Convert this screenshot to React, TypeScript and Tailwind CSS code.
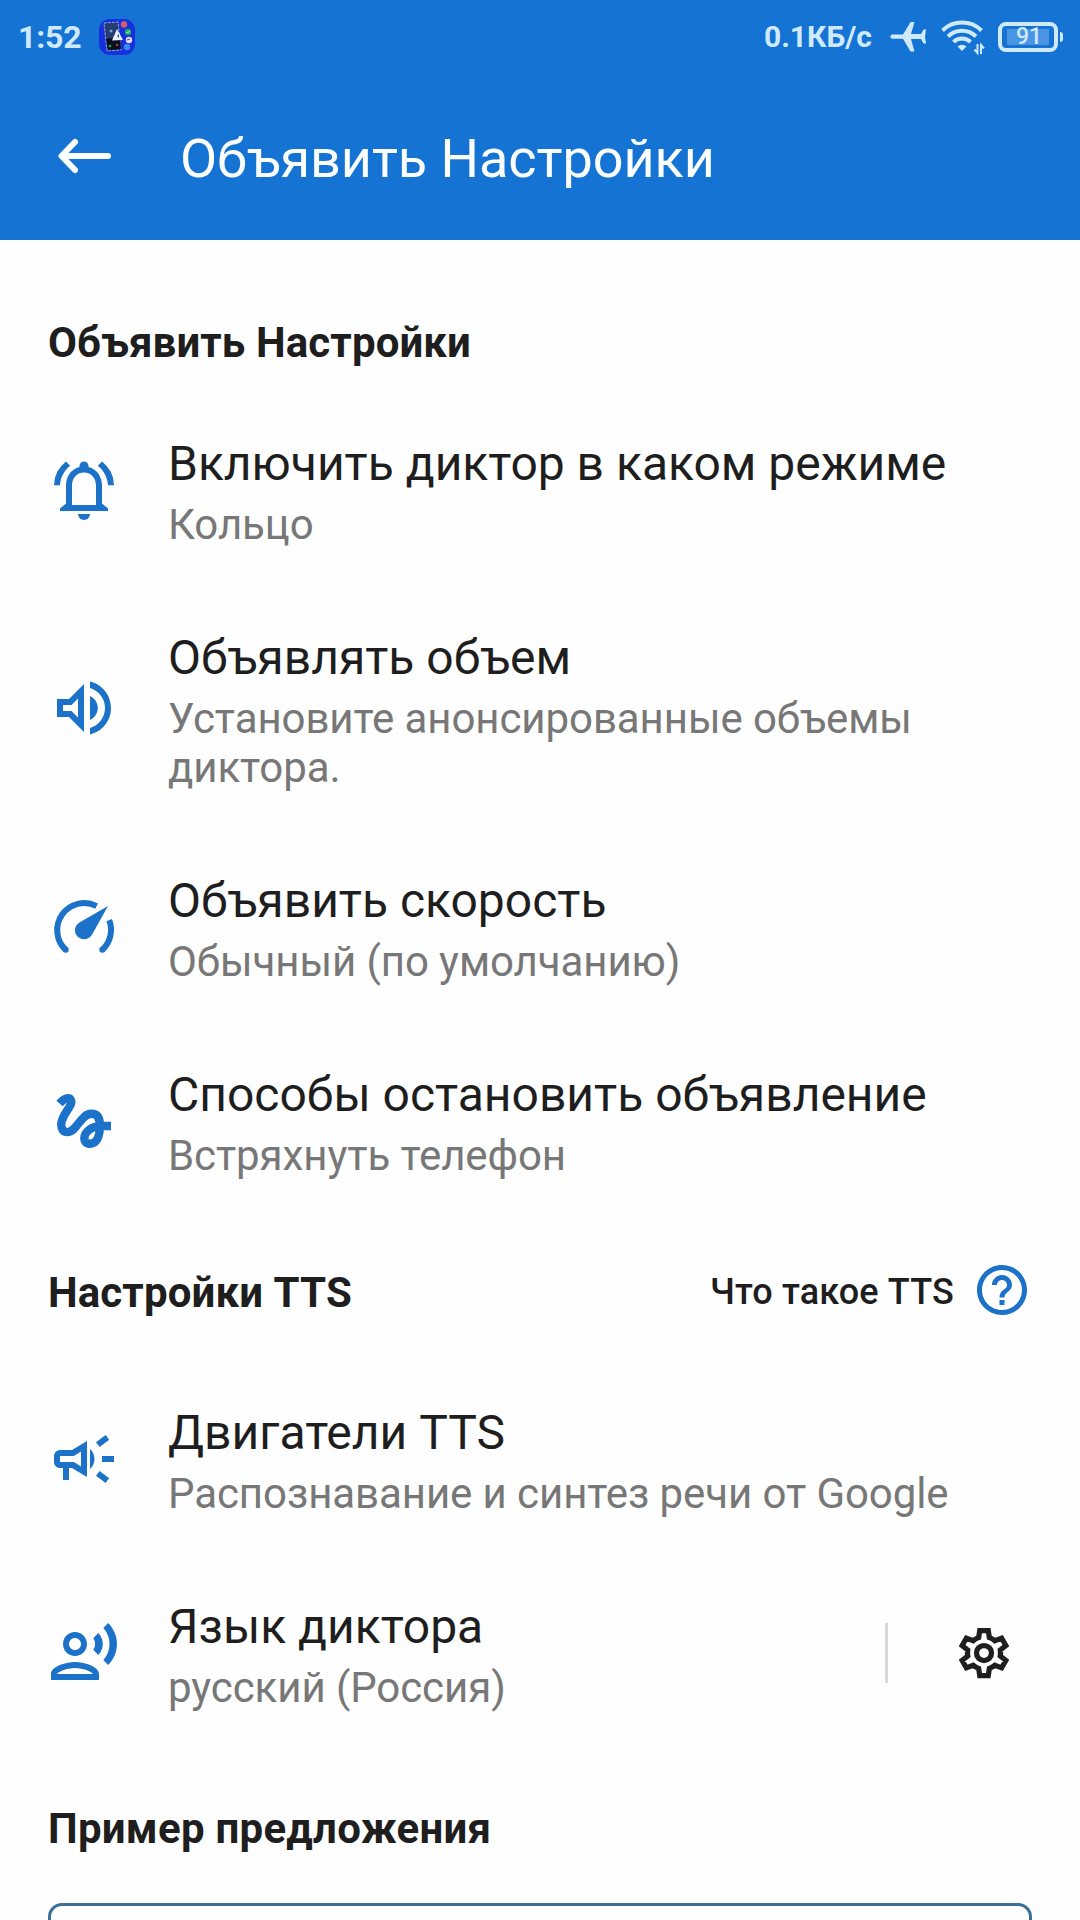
import React from 'react';
import { MdHelpOutline, MdOutlineRecordVoiceOver } from 'react-icons/md';

interface IconProps {
  className?: string;
}

interface SettingRowProps {
  icon: React.ReactNode;
  title: string;
  summary: React.ReactNode;
  tall?: boolean;
  action?: React.ReactNode;
}

function BellIcon({ className }: IconProps) {
  return (
    <svg viewBox="0 0 24 24" fill="currentColor" className={className}>
      <path d="M12 22a2 2 0 0 0 2-2h-4a2 2 0 0 0 2 2z" />
      <path d="M18 16.500v-6c0-3-1.600-5.400-4.500-6.200V4a1.500 1.500 0 0 0-3 0v.3C7.600 5.100 6 7.500 6 10.500v6l-2 1.700v.8h16v-.8zM16 17H8v-6.400C8 8.200 9.500 6.200 12 6.200s4 2 4 4.400z" />
      <path d="M7.400 3.900 6 2.500A10.300 10.300 0 0 0 2 10.400h2c.15-2.650 1.500-5 3.400-6.500zM20 10.400h2a10.300 10.300 0 0 0-4-7.900l-1.400 1.400c1.900 1.500 3.250 3.850 3.400 6.500z" />
    </svg>
  );
}

function VolumeIcon({ className }: IconProps) {
  return (
    <svg viewBox="0 0 24 24" fill="currentColor" className={className}>
      <path fillRule="evenodd" d="M3 9h4l5-5v16l-5-5H3zM5 11v2h2.850L10 15.150v-6.300L7.850 11z" />
      <path d="M14 8v8c1.500-.7 2.600-2.200 2.600-4S15.500 8.700 14 8z" />
      <path d="M14 3.200v2.100c2.900.9 5 3.500 5 6.700s-2.100 5.800-5 6.700v2.100c4-.9 7-4.500 7-8.800s-3-7.900-7-8.800z" />
    </svg>
  );
}

function SpeedIcon({ className }: IconProps) {
  return (
    <svg viewBox="0 0 24 24" className={className}>
      <path d="M5.900 19.600A9 9 0 0 1 16.200 5.050M20.400 9.700a9 9 0 0 1-2.300 9.900" fill="none" stroke="currentColor" strokeWidth="2" />
      <circle cx="5.900" cy="19.600" r="1" fill="currentColor" />
      <circle cx="18.100" cy="19.600" r="1" fill="currentColor" />
      <path d="M20 5 10.500 10.500c-1.500.9-1.900 2.700-1.100 4.100 1.200 2 4.100 2 5.300-.1z" fill="currentColor" />
    </svg>
  );
}

function GestureIcon({ className }: IconProps) {
  return (
    <svg viewBox="0 0 24 24" fill="none" stroke="currentColor" strokeWidth="2.800" className={className}>
      <path d="M3.850 6.200C4.900 5 5.700 4.400 6.500 4.400c1.300 0 1.600 1.300.8 2.600C6.200 9 4.400 10.900 4.400 13.200c0 1.700.8 2.500 2 2.500 3.300 0 4.400-6.100 8.100-6.100 1.900 0 2.800 1.300 2.800 4 0 3.700-1.100 6-3.400 6-1.200 0-1.800-.8-1.800-1.800 0-2 2.100-4.150 5.900-4.150h3" />
    </svg>
  );
}

function CampaignIcon({ className }: IconProps) {
  return (
    <svg viewBox="0 0 24 24" fill="currentColor" className={className}>
      <path d="M18 11h4v2h-4zM16 17.600l3.200 2.400 1.200-1.600-3.200-2.400zM20.400 5.600 19.200 4 16 6.400 17.200 8z" />
      <path fillRule="evenodd" d="M4 9a2 2 0 0 0-2 2v2c0 1.100.9 2 2 2h1v4h2v-4h1l5 3V6L8 9zm5.030 1.710L11 9.530v4.940l-1.970-1.180-.48-.29H4v-2h4.550z" />
      <path d="M15.500 12c0-1.330-.58-2.530-1.500-3.350v6.690c.92-.81 1.500-2.010 1.500-3.340z" />
    </svg>
  );
}

function GearIcon({ className }: IconProps) {
  return (
    <svg viewBox="0 0 24 24" fill="none" stroke="currentColor" strokeWidth="2.100" className={className}>
      <circle cx="12" cy="12" r="3" />
      <path d="M10.300 3h3.400l.45 2.850a6.500 6.500 0 0 1 2.200 1.260l2.700-1.040 1.700 2.950-2.240 1.800a6.500 6.500 0 0 1 0 2.360l2.240 1.800-1.700 2.950-2.700-1.040a6.500 6.500 0 0 1-2.200 1.260L13.700 21h-3.400l-.45-2.850a6.500 6.500 0 0 1-2.200-1.260l-2.700 1.040-1.700-2.950 2.240-1.800a6.500 6.500 0 0 1 0-2.360l-2.240-1.800 1.700-2.950 2.700 1.040a6.500 6.500 0 0 1 2.200-1.260z" />
    </svg>
  );
}

function AppBadge() {
  return (
    <svg viewBox="0 0 36 36" className="ml-[18px] size-9">
      <rect width="36" height="36" rx="11" fill="#1530dc" />
      <path d="m5 4 14-1 3 28-14 1z" fill="#233c72" stroke="#a9bce8" strokeWidth="0.800" strokeDasharray="3 1" />
      <path d="m7 20 14-2 1 12-13 1z" fill="#07101f" />
      <path d="m18 10 6 11-11 .5z" fill="#e6f0ff" />
      <path d="m18 17 2-2v4z" fill="#405584" />
      <circle cx="12" cy="12" r="1.600" fill="#7b9dd0" />
      <circle cx="11" cy="27" r="1.300" fill="#21a45b" />
      <circle cx="18" cy="26" r="1.300" fill="#b43343" />
      <circle cx="25" cy="5.500" r="3.200" fill="#dd5a70" />
      <circle cx="29" cy="13" r="3.200" fill="#21ad62" />
      <circle cx="30" cy="21" r="3.200" fill="#e3dcfa" />
      <circle cx="28" cy="28" r="3.200" fill="#3d8af0" />
      <path d="m27.500 13 1 1 2-2" stroke="#d5ffe5" fill="none" />
      <path d="m28 21 3-1" stroke="#7e388c" />
    </svg>
  );
}

function StatusBar() {
  return (
    <div className="flex h-[72px] items-center pt-0.5 pr-[17px] pl-[18px] font-bold text-[#cfeaff]">
      <span className="w-[63px] text-[32px] leading-9 tracking-[-0.2px] whitespace-nowrap">1:52</span>
      <AppBadge />
      <span className="ml-auto text-[30px] leading-9 whitespace-nowrap">0.1КБ/с</span>
      <svg viewBox="0 0 36 32" className="ml-[18px] h-8 w-9" fill="currentColor">
        <path d="M2.500 13.500H13L20.500 1h4L21 13h10l2.500-4.500H36l-1 7 1 7h-2.500L31 18H21l3.500 12.500h-4L13 17.800H2.500a2.150 2.150 0 0 1 0-4.300z" />
      </svg>
      <svg viewBox="0 0 44 36" className="mr-px ml-[15px] h-9 w-[44px]" fill="none" stroke="currentColor" strokeWidth="4">
        <path d="M1.500 11.500a28 28 0 0 1 39 0M7 17.500a20 20 0 0 1 28 0M12.500 23a12 12 0 0 1 17 0" />
        <path d="M16.500 27.500q4.500-3.500 9 0L21 32z" fill="currentColor" stroke="none" />
        <path d="M36.500 25v9l-3-3.500M40 35v-9l3 3.500" strokeWidth="2" />
      </svg>
      <div className="ml-[12px] flex items-center">
        <div className="flex h-[30px] w-[60px] items-center justify-center rounded-[8px] border-4 border-current">
          <span className="flex h-4 w-[42px] items-center justify-center bg-[#4a95e2] pl-0.5 text-[23px] leading-4 font-medium">91</span>
        </div>
        <div className="ml-0.5 h-2.5 w-[3px] rounded-r-sm bg-current" />
      </div>
    </div>
  );
}

function SettingRow({ icon, title, summary, tall, action }: SettingRowProps) {
  return (
    <div className={`flex items-center pl-12 ${tall ? 'h-[243px]' : 'h-[194px]'}`}>
      <div className="mb-[3px] shrink-0 text-[#1b72c8]">{icon}</div>
      <div className="ml-12 flex-1 pt-[2px]">
        <div className="text-[48px] leading-[56px] whitespace-nowrap text-[#1e1e1e]">{title}</div>
        <div className="mt-[8px] text-[42px] leading-[49px] tracking-[-0.08px] whitespace-nowrap text-[#777777]">{summary}</div>
      </div>
      {action}
    </div>
  );
}

export default function App() {
  return (
    <div className="h-[1920px] w-[1080px] overflow-hidden bg-[#fefefe] font-['Roboto',sans-serif] text-[#1e1e1e]">
      <header className="h-[240px] bg-[#1573d3]">
        <StatusBar />
        <div className="flex h-[168px] items-center pl-[58px] text-[#fbffff]">
          <svg viewBox="0 0 54 36" className="h-9 w-[54px]" fill="none" stroke="currentColor" strokeWidth="6" strokeLinecap="round" strokeLinejoin="round">
            <path d="M50 18H4M17 4 3.500 18 17 32" />
          </svg>
          <h1 className="ml-[68px] pt-1 text-[54px] leading-[63px] tracking-[-0.05px] whitespace-nowrap">Объявить Настройки</h1>
        </div>
      </header>

      <main>
        <h2 className="mt-[78px] pl-12 text-[42px] leading-[49px] font-bold tracking-[0.12px]">Объявить Настройки</h2>
        <div className="mt-[27px]">
          <SettingRow
            icon={<BellIcon className="size-[72px]" />}
            title="Включить диктор в каком режиме"
            summary="Кольцо"
          />
          <SettingRow
            tall
            icon={<VolumeIcon className="size-[72px]" />}
            title="Объявлять объем"
            summary={<>Установите анонсированные объемы<br />диктора.</>}
          />
          <SettingRow
            icon={<SpeedIcon className="size-[72px]" />}
            title="Объявить скорость"
            summary="Обычный (по умолчанию)"
          />
          <SettingRow
            icon={<GestureIcon className="size-[72px]" />}
            title="Способы остановить объявление"
            summary="Встряхнуть телефон"
          />
        </div>

        <div className="mt-[49px] flex h-[49px] items-center pr-12 pl-12">
          <h2 className="text-[42px] leading-[49px] font-bold tracking-[0.12px]">Настройки TTS</h2>
          <span className="mb-[2px] ml-auto text-[36px] leading-[42px] font-medium tracking-[0.15px]">Что такое TTS</span>
          <MdHelpOutline className="mb-[5px] ml-[18px] size-[60px] text-[#1b72c8]" />
        </div>
        <div className="mt-[46px]">
          <SettingRow
            icon={<CampaignIcon className="size-[72px]" />}
            title="Двигатели TTS"
            summary="Распознавание и синтез речи от Google"
          />
          <SettingRow
            icon={<MdOutlineRecordVoiceOver className="size-[72px]" />}
            title="Язык диктора"
            summary="русский (Россия)"
            action={
              <div className="mb-[2px] flex items-center">
                <div className="h-[60px] w-[3px] bg-[#d8d8d8]" />
                <GearIcon className="mr-[66px] ml-[66px] size-[60px]" />
              </div>
            }
          />
        </div>

        <h2 className="mt-[53px] pl-12 text-[42px] leading-[49px] font-bold tracking-[0.25px]">Пример предложения</h2>
        <div className="mx-[48px] mt-[50px] h-[150px] rounded-[14px] border-[3px] border-[#3b6f98]" />
      </main>
    </div>
  );
}
